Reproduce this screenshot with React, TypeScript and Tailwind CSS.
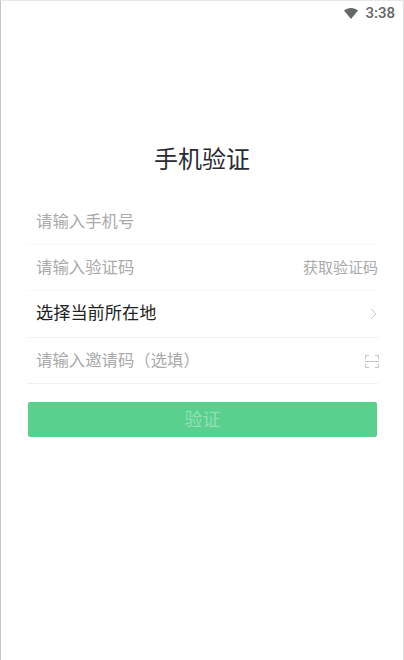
const cjk = "font-['Roboto','Noto_Sans_CJK_SC',sans-serif]";

function Row({ children, line = "border-[#f1f1f1]", height = "h-[46px]" }: { children: React.ReactNode; line?: string; height?: string }) {
  return (
    <div className={`flex items-center justify-between border-b pl-[9px] ${height} ${line}`}>
      {children}
    </div>
  );
}

export default function App() {
  return (
    <div className={`flex h-[660px] w-[404px] flex-col overflow-hidden border-x border-l-[#c4c4c4] border-r-[#dedede] border-t border-t-[#e8e8e8] bg-white ${cjk}`}>
      {/* status bar */}
      <div className="flex h-[24px] items-center justify-end gap-[7px] pr-[8px]">
        <svg width="14" height="11" viewBox="0 0 14 11">
          <path d="M0 2.6C2 .9 4.4 0 7 0s5 .9 7 2.6L7 11z" fill="#666666" />
        </svg>
        <span className="text-[15px] font-medium text-[#666666]">3:38</span>
      </div>

      <h1 className="mt-[120px] text-center text-[24px] leading-[30px] font-normal text-[#2a2a33]">手机验证</h1>

      <div className="mt-[24px] ml-[26px] w-[351px] text-[16.4px]">
        <Row line="border-[#f8f8f8] pt-[2px]">
          <span className="text-[#aaaaaa]">请输入手机号</span>
        </Row>
        <Row line="border-[#f8f8f8] pt-[2px]">
          <span className="text-[#aaaaaa]">请输入验证码</span>
          <span className="text-[15px] text-[#aaaaaa]">获取验证码</span>
        </Row>
        <Row height="h-[47px]">
          <span className="text-[17.2px] text-[#222222]">选择当前所在地</span>
          <svg width="8" height="12" viewBox="0 0 8 12" fill="none">
            <path d="M1 1l5 5-5 5" stroke="#c8c8c8" strokeWidth="1" />
          </svg>
        </Row>
        <Row line="border-[#f1f1f1] pt-[2px]">
          <span className="text-[#aaaaaa]">请输入邀请码（选填）</span>
          <svg width="14" height="13" viewBox="0 0 14 13" fill="none" className="-mr-[1px]">
            <path d="M.5 4V.5H4M10 .5h3.5V4M.5 9v3.5H4M10 12.5h3.5V9M0 6.5h14" stroke="#c4c4c4" strokeWidth="1" />
          </svg>
        </Row>
      </div>

      <button className="mt-[18px] ml-[27px] h-[35px] w-[349px] rounded-[2px] bg-[#5ad08f] text-[18px] text-[#8fe0b4]">
        验证
      </button>
    </div>
  );
}
